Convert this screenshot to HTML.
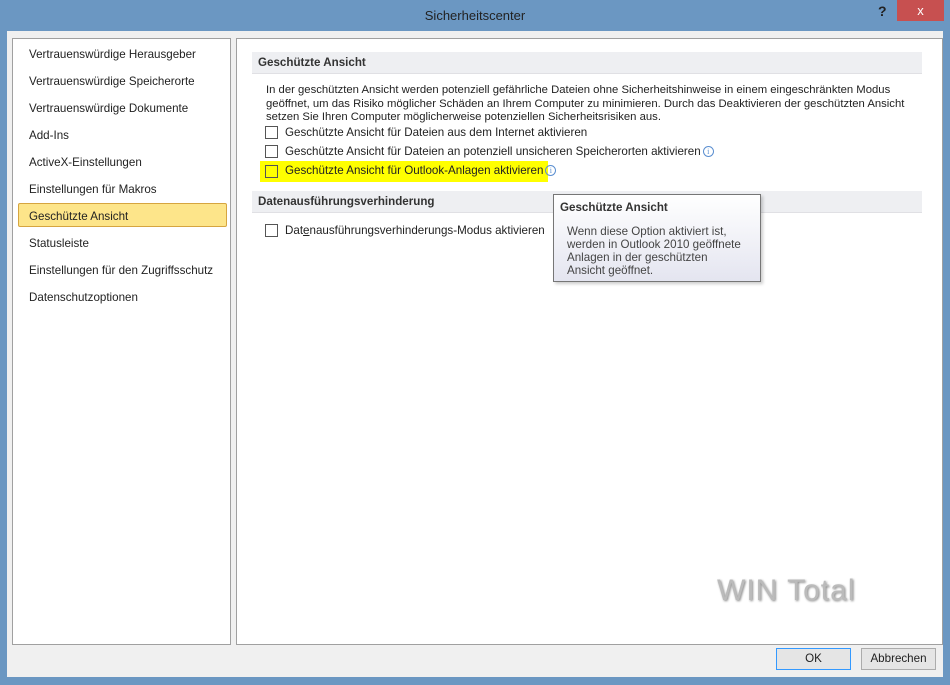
<!DOCTYPE html>
<html><head><style>
*{margin:0;padding:0;box-sizing:border-box}
body{width:950px;height:685px;background:#6b97c2;font-family:"Liberation Sans",sans-serif;font-size:11.6px;color:#222;position:relative;overflow:hidden}
.title{position:absolute;left:0;top:0;width:950px;height:30px;text-align:center;line-height:32px;font-size:13px;color:#222}
.q{position:absolute;left:878px;top:3px;font-size:14px;font-weight:bold;color:#222}
.x{position:absolute;left:897px;top:0;width:47px;height:21px;background:#c75050;color:#fff;text-align:center;line-height:21px;font-size:13px}
.client{position:absolute;left:7px;top:31px;width:936px;height:646px;background:#f0f0f0}
.left{position:absolute;left:12px;top:38px;width:219px;height:607px;background:#fff;border:1px solid #a0a0a0}
.left div{position:absolute;left:16px;white-space:nowrap}
.sel{position:absolute;left:5px;top:164px;width:209px;height:24px;background:#fde58a;border:1px solid #d6a540;border-radius:2px}
.right{position:absolute;left:236px;top:38px;width:707px;height:607px;background:#fff;border:1px solid #a0a0a0}
.hd{position:absolute;left:15px;width:670px;height:22px;background:#eeeff2;border-bottom:1px solid #e0e0e4;font-weight:bold;color:#333;padding-left:6px;line-height:22px}
.p{position:absolute;left:29px;top:45px;line-height:13.5px;white-space:nowrap;font-size:11.3px}
.cb{position:absolute;left:28px;width:13px;height:13px;border:1px solid #555;background:#fff}
.lb{position:absolute;left:48px;white-space:nowrap}
.i{display:inline-block;width:11px;height:11px;border:1px solid #5b8fd0;border-radius:50%;font-size:8px;line-height:9px;text-align:center;color:#5b8fd0;vertical-align:middle;margin-left:2px;font-family:"Liberation Serif",serif}
.tip{position:absolute;left:553px;top:194px;width:208px;height:88px;background:linear-gradient(#fff,#e4e5f0);border:1px solid #767676;box-shadow:2px 2px 3px rgba(0,0,0,.2)}
.btn{position:absolute;top:648px;height:22px;background:#e5e5e5;border:1px solid #acacac;text-align:center;line-height:20px}
</style></head><body>
<div class="title">Sicherheitscenter</div>
<div class="q">?</div><div class="x">x</div>
<div class="client"></div>
<div class="left">
<div style="top:9px">Vertrauenswürdige Herausgeber</div>
<div style="top:36px">Vertrauenswürdige Speicherorte</div>
<div style="top:63px">Vertrauenswürdige Dokumente</div>
<div style="top:90px">Add-Ins</div>
<div style="top:117px">ActiveX-Einstellungen</div>
<div style="top:144px">Einstellungen für Makros</div>
<span class="sel"></span>
<div style="top:171px">Geschützte Ansicht</div>
<div style="top:198px">Statusleiste</div>
<div style="top:225px">Einstellungen für den Zugriffsschutz</div>
<div style="top:252px">Datenschutzoptionen</div>
</div>
<div class="right">
<div class="hd" style="top:13px">Geschützte Ansicht</div>
<div class="p">In der geschützten Ansicht werden potenziell gefährliche Dateien ohne Sicherheitshinweise in einem eingeschränkten Modus<br>geöffnet, um das Risiko möglicher Schäden an Ihrem Computer zu minimieren. Durch das Deaktivieren der geschützten Ansicht<br>setzen Sie Ihren Computer möglicherweise potenziellen Sicherheitsrisiken aus.</div>
<div class="cb" style="top:87px"></div><div class="lb" style="top:87px">Geschützte Ansicht für Dateien aus dem Internet aktivieren</div>
<div class="cb" style="top:106px"></div><div class="lb" style="top:106px">Geschützte Ansicht für Dateien an potenziell unsicheren Speicherorten aktivieren<span class="i">i</span></div>
<div style="position:absolute;left:23px;top:122px;width:288px;height:21px;background:#ffff00"></div>
<div class="cb" style="top:126px;background:#ffff00"></div><div class="lb" style="top:125px">Geschützte Ansicht für Outlook-Anlagen aktivieren<span class="i">i</span></div>
<div class="hd" style="top:152px">Datenausführungsverhinderung</div>
<div class="cb" style="top:185px"></div><div class="lb" style="top:185px">Dat<u>e</u>nausführungsverhinderungs-Modus aktivieren</div>
<div style="position:absolute;left:480px;top:535px;font-size:30px;color:#bbb;letter-spacing:1px;text-shadow:1px 1px 2px #888">WIN Total</div>
</div>
<div class="tip">
<div style="position:absolute;left:6px;top:6px;font-weight:bold;color:#333">Geschützte Ansicht</div>
<div style="position:absolute;left:13px;top:30px;line-height:13px;color:#444;white-space:nowrap">Wenn diese Option aktiviert ist,<br>werden in Outlook 2010 geöffnete<br>Anlagen in der geschützten<br>Ansicht geöffnet.</div>
</div>
<div class="btn" style="left:776px;width:75px;border-color:#3399ff">OK</div>
<div class="btn" style="left:861px;width:75px">Abbrechen</div>
</body></html>
